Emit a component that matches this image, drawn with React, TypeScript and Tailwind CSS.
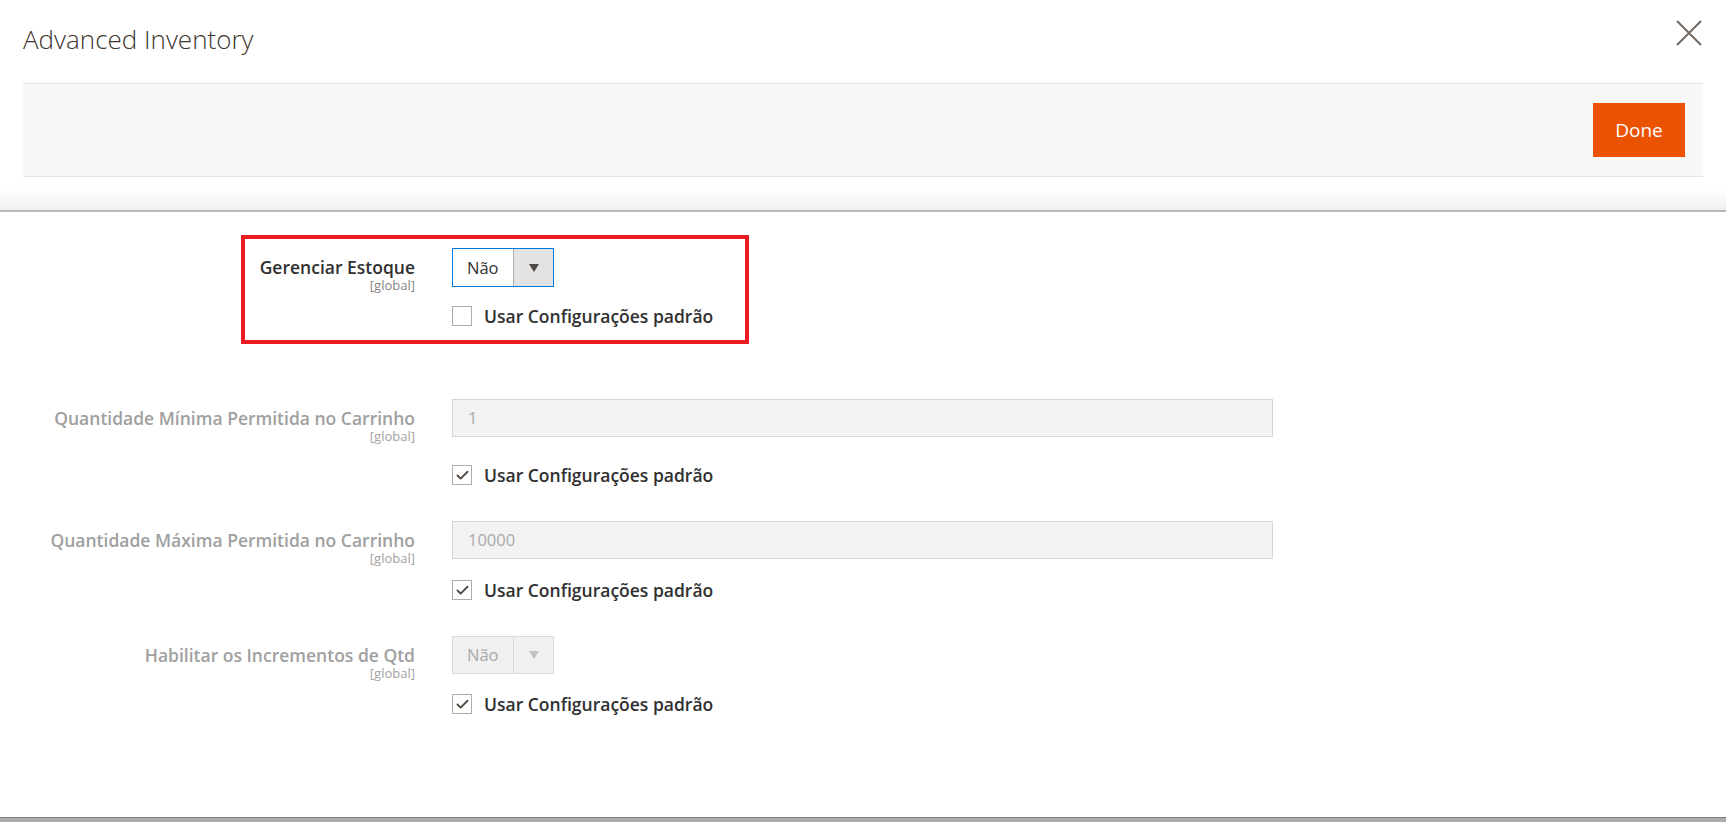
import { Check } from 'lucide-react';

type FieldProps = {
    label: string;
    disabled?: boolean;
    boxed?: boolean;
    children: React.ReactNode;
    checkGap: string;
    checked: boolean;
};

function CloseIcon() {
    return (
        <svg width="26" height="26" viewBox="0 0 26 26" fill="none" stroke="#736963" strokeWidth="2">
            <path d="M1 1 L25 25 M25 1 L1 25" />
        </svg>
    );
}

function Arrow({ disabled }: { disabled?: boolean }) {
    return (
        <svg width="10" height="8" viewBox="0 0 10 8">
            <path d="M0 0 H10 L5 8 Z" fill={disabled ? '#c2c2c2' : '#514943'} />
        </svg>
    );
}

function Select({ disabled }: { disabled?: boolean }) {
    return (
        <div
            className={
                disabled
                    ? 'flex h-[38px] w-[102px] border border-[#dadada] bg-[#f0f0f0]'
                    : 'flex h-[39px] w-[102px] border border-[#007bdb] bg-white'
            }
        >
            <span className={disabled ? 'flex-1 pl-[14px] text-[16.5px] leading-[36px] text-[#a8a8a8]' : 'flex-1 pl-[14px] text-[16.5px] leading-[37px] text-[#303030]'}>
                Não
            </span>
            <span
                className={
                    disabled
                        ? 'flex w-[40px] items-center justify-center border-l border-[#dadada] bg-[#f0f0f0]'
                        : 'flex w-[40px] items-center justify-center border-l border-[#adadad] bg-[#e3e3e3]'
                }
            >
                <Arrow disabled={disabled} />
            </span>
        </div>
    );
}

function TextInput({ value }: { value: string }) {
    return (
        <div className="h-[38px] w-[821px] border border-[#d6d6d6] bg-[#f3f3f3] pl-[15px] text-[16.5px] leading-[36px] text-[#a9a9a9]">
            {value}
        </div>
    );
}

function UseDefault({ checked, gap }: { checked: boolean; gap: string }) {
    return (
        <div className={`flex items-center gap-[12px] ${gap}`}>
            <span className="flex h-[20px] w-[20px] items-center justify-center border border-[#adadad] bg-white">
                {checked && <Check size={15} strokeWidth={3} color="#514943" />}
            </span>
            <span className="text-[17.5px] font-semibold leading-[20px] text-[#303030]">Usar Configurações padrão</span>
        </div>
    );
}

function Field({ label, disabled, boxed, children, checkGap, checked }: FieldProps) {
    return (
        <div className={boxed ? 'ml-[241px] flex w-[508px] border-4 border-[#ed1c24] pt-[9px] pb-[14px]' : 'flex'}>
            <div className={boxed ? 'w-[170px] shrink-0 pt-[9px] text-right' : 'w-[415px] shrink-0 pt-[9px] text-right'}>
                <div className={disabled ? 'text-[17.5px] font-semibold leading-[20px] text-[#a0a0a0]' : 'text-[17.5px] font-semibold leading-[20px] text-[#303030]'}>
                    {label}
                </div>
                <div className={disabled ? 'text-[13px] leading-[17px] text-[#a3a3a3]' : 'text-[13px] leading-[17px] text-[#858585]'}>[global]</div>
            </div>
            <div className="ml-[37px]">
                {children}
                <UseDefault checked={checked} gap={checkGap} />
            </div>
        </div>
    );
}

export default function App() {
    return (
        <div className="h-[822px] w-full bg-[#ababab] font-['Open_Sans',sans-serif]">
            <div className="h-[818px] border-b border-[#7e7e7e] bg-white">
                <header className="px-[23px]">
                    <div className="flex h-[83px] items-start justify-between">
                        <h1 className="pt-[23px] text-[26px] font-light leading-[32px] text-[#41362f]">Advanced Inventory</h1>
                        <button className="mt-[20px] mr-[1px]">
                            <CloseIcon />
                        </button>
                    </div>
                    <div className="flex h-[94px] items-center justify-end border-y border-[#e3e3e3] bg-[#f8f8f8] pr-[18px]">
                        <button className="h-[54px] w-[92px] bg-[#eb5202] text-[19px] text-white">Done</button>
                    </div>
                </header>
                <div className="h-[35px] border-b-2 border-[#b8b8b8] bg-gradient-to-b from-white from-40% to-[#efefef]" />

                <div className="pt-[23px]">
                    <Field label="Gerenciar Estoque" boxed checked={false} checkGap="mt-[19px]">
                        <Select />
                    </Field>

                    <div className="mt-[55px]">
                        <Field label="Quantidade Mínima Permitida no Carrinho" disabled checked checkGap="mt-[28px]">
                            <TextInput value="1" />
                        </Field>
                    </div>

                    <div className="mt-[36px]">
                        <Field label="Quantidade Máxima Permitida no Carrinho" disabled checked checkGap="mt-[21px]">
                            <TextInput value="10000" />
                        </Field>
                    </div>

                    <div className="mt-[36px]">
                        <Field label="Habilitar os Incrementos de Qtd" disabled checked checkGap="mt-[20px]">
                            <Select disabled />
                        </Field>
                    </div>
                </div>
            </div>
        </div>
    );
}
